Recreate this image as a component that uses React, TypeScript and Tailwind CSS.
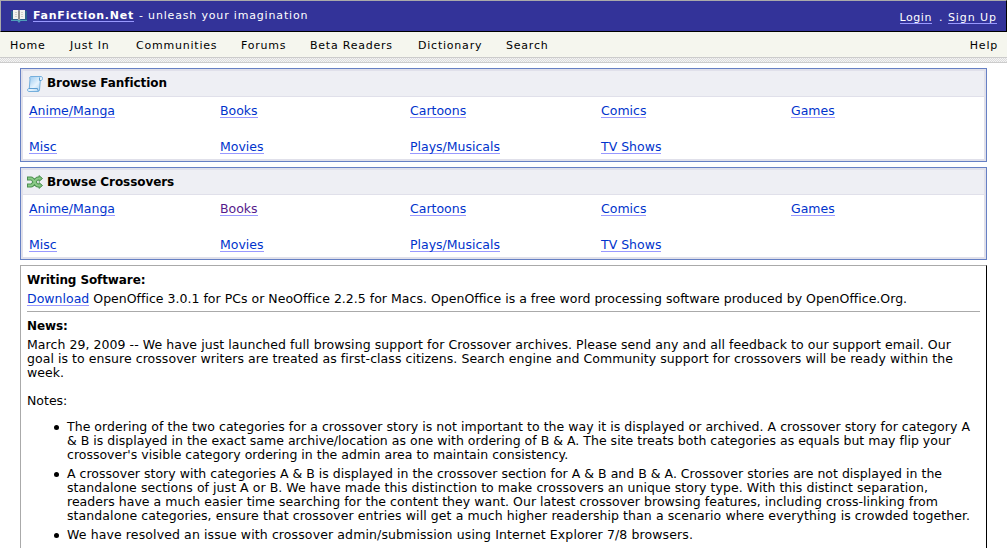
import React from "react";

type LinkItem = {
    label: string;
    visited?: boolean;
};

type Line = {
    text: string;
    tracking: string;
};

const menu = [
    { label: "Home", width: "w-[60px]" },
    { label: "Just In", width: "w-[66px]" },
    { label: "Communities", width: "w-[105px]" },
    { label: "Forums", width: "w-[69px]" },
    { label: "Beta Readers", width: "w-[108px]" },
    { label: "Dictionary", width: "w-[88px]" },
    { label: "Search", width: "w-[60px]" },
];

const categories: LinkItem[] = [
    { label: "Anime/Manga" },
    { label: "Books" },
    { label: "Cartoons" },
    { label: "Comics" },
    { label: "Games" },
    { label: "Misc" },
    { label: "Movies" },
    { label: "Plays/Musicals" },
    { label: "TV Shows" },
];

const crossovers: LinkItem[] = categories.map((c) => (c.label === "Books" ? { ...c, visited: true } : c));

const news: Line[] = [
    {
        text: "March 29, 2009 -- We have just launched full browsing support for Crossover archives. Please send any and all feedback to our support email. Our",
        tracking: "tracking-[0.058px]",
    },
    {
        text: "goal is to ensure crossover writers are treated as first-class citizens. Search engine and Community support for crossovers will be ready within the",
        tracking: "tracking-[0.056px]",
    },
    { text: "week.", tracking: "tracking-[0.05px]" },
];

const notes: Line[][] = [
    [
        {
            text: "The ordering of the two categories for a crossover story is not important to the way it is displayed or archived. A crossover story for category A",
            tracking: "tracking-[0.036px]",
        },
        {
            text: "& B is displayed in the exact same archive/location as one with ordering of B & A. The site treats both categories as equals but may flip your",
            tracking: "tracking-[0.015px]",
        },
        {
            text: "crossover's visible category ordering in the admin area to maintain consistency.",
            tracking: "tracking-[0.01px]",
        },
    ],
    [
        {
            text: "A crossover story with categories A & B is displayed in the crossover section for A & B and B & A. Crossover stories are not displayed in the",
            tracking: "tracking-[0.017px]",
        },
        {
            text: "standalone sections of just A or B. We have made this distinction to make crossovers an unique story type. With this distinct separation,",
            tracking: "tracking-[0.054px]",
        },
        {
            text: "readers have a much easier time searching for the content they want. Our latest crossover browsing features, including cross-linking from",
            tracking: "tracking-[0.033px]",
        },
        {
            text: "standalone categories, ensure that crossover entries will get a much higher readership than a scenario where everything is crowded together.",
            tracking: "tracking-[0.085px]",
        },
    ],
    [
        {
            text: "We have resolved an issue with crossover admin/submission using Internet Explorer 7/8 browsers.",
            tracking: "tracking-[0.117px]",
        },
    ],
];

const BookIcon = () => (
    <svg width="16" height="14" viewBox="0 0 16 14" className="shrink-0">
        <path d="M0 2h16v10H9.500l-1 1.500h-1L6.500 12H0z" fill="#2b5f8a" />
        <path d="M0 11h16v1H9.500l-1 1.500h-1L6.500 12H0z" fill="#4f9dba" />
        <path d="M2 1h5l1 1 1-1h5v9H9.500L8 11l-1.500-1H2z" fill="#f2f2ee" />
        <path d="M7 1.500l1 .5 1-.5V10l-1 1-1-1z" fill="#8e8e8c" />
        <path d="M4 3.500h2M4 5.500h2M4 7.500h2M10 3.500h2M10 5.500h2M10 7.500h2" stroke="#cfcfca" />
    </svg>
);

const ScrollIcon = () => (
    <svg width="16" height="16" viewBox="0 0 16 16" className="shrink-0">
        <defs>
            <linearGradient id="paper" x1="0" y1="0" x2="1" y2="1">
                <stop offset="0" stopColor="#8fc4ef" />
                <stop offset="0.55" stopColor="#e6f3fd" />
                <stop offset="1" stopColor="#9ccbf0" />
            </linearGradient>
        </defs>
        <path
            d="M3.500.5h10.500c1 0 1.500.8 1.500 2s-.5 2-1.500 2h-.7L12.500 14c-.1 1-.7 1.500-1.500 1.500H2C1 15.500.5 14.800.5 14s.5-1.500 1.500-1.500h.3L3 3C2.500 2 2.500 1 3.500.5z"
            fill="url(#paper)"
            stroke="#75afdc"
        />
        <path d="M12.500 1.500v3h1.500M2 12.500h8.500c0 1 .3 2 1 2.500" fill="none" stroke="#5d9ed2" />
    </svg>
);

const ShuffleIcon = () => (
    <svg width="16" height="14" viewBox="0 0 16 14" className="shrink-0">
        <g fill="none" strokeLinejoin="round">
            <path d="M0 3.500h4c3 0 4 7 7 7h1.500M0 10.500h4c3 0 4-7 7-7h1.500" stroke="#4c8f50" strokeWidth="4" />
            <path d="M12 .6l3.500 2.900L12 6.400zM12 7.600l3.500 2.900-3.500 2.900z" fill="#7fc27b" stroke="#4c8f50" />
            <path d="M1 3.500h3c3 0 4 7 7 7h2M1 10.500h3c3 0 4-7 7-7h2" stroke="#8acb86" strokeWidth="2" />
        </g>
    </svg>
);

const TextLink: React.FC<LinkItem> = ({ label, visited }) => (
    <a
        href="#"
        className={`inline-block border-b border-[#9999ff] leading-[13px] ${
            visited ? "text-[#551a8b]" : "text-[#0033cc]"
        }`}
    >
        {label}
    </a>
);

const TextLines: React.FC<{ lines: Line[] }> = ({ lines }) => (
    <>
        {lines.map((line) => (
            <span key={line.text} className={`block whitespace-nowrap ${line.tracking}`}>
                {line.text}
            </span>
        ))}
    </>
);

type PanelProps = {
    title: string;
    icon: React.ReactNode;
    items: LinkItem[];
    headerClass: string;
};

const Panel: React.FC<PanelProps> = ({ title, icon, items, headerClass }) => (
    <section className="border border-[#6680c4]">
        <div className="border-2 border-[#e0e0ea]">
            <h2
                className={`flex items-center gap-1 border-b border-[#e0e0ea] bg-[#eeeff4] pl-1 text-[12px] leading-[14px] font-bold tracking-[-0.07px] ${headerClass}`}
            >
                {icon}
                <span className="pb-px">{title}</span>
            </h2>
            <div className="grid grid-cols-[191px_190px_191px_190px_auto] gap-y-[22px] pt-[7px] pb-[5px] pl-[6px]">
                {items.map((item) => (
                    <div key={item.label} className="flex">
                        <TextLink {...item} />
                    </div>
                ))}
            </div>
        </div>
    </section>
);

const App: React.FC = () => {
    return (
        <div className="h-[548px] overflow-hidden bg-white font-['DejaVu_Sans',Verdana,sans-serif] text-[12.5px] leading-[14px] text-black">
            <header className="flex h-8 items-start justify-between border border-t-[#aaaaaa] border-r-black border-b-black border-l-[#aaaaaa] bg-[#333399] pr-[9px] pl-[10px] text-[11px] leading-[13px] text-white">
                <div className="flex pt-2">
                    <BookIcon />
                    <div className="ml-1.5 flex items-baseline pt-px">
                        <a href="#" className="inline-block border-b border-[#9999ff] leading-[11px] font-bold tracking-[0.75px]">
                            FanFiction.Net
                        </a>
                        <span className="ml-[5px] leading-[11px] tracking-[0.83px]">- unleash your imagination</span>
                    </div>
                </div>
                <div className="flex items-baseline pt-[11px] leading-[11px] tracking-[0.93px]">
                    <a href="#" className="inline-block border-b border-[#9999ff] tracking-[0.55px]">Login</a>
                    <span className="w-4 pl-[7px]">.</span>
                    <a href="#" className="inline-block border-b border-[#9999ff]">Sign Up</a>
                </div>
            </header>

            <nav className="flex h-[25px] bg-[#f5f6ee] pt-[7px] pr-[9px] pl-[10px] text-[11px] leading-[13px] tracking-[0.78px]">
                {menu.map((item) => (
                    <a key={item.label} href="#" className={`whitespace-nowrap ${item.width}`}>
                        {item.label}
                    </a>
                ))}
                <a href="#" className="ml-auto">Help</a>
            </nav>
            <div className="h-1.5 border-y border-[#cccccc] bg-[repeating-conic-gradient(#dcdcdc_0_25%,#f4f4f4_0_50%)] bg-[length:2px_2px]" />

            <main className="mr-5 ml-5 flex flex-col gap-[5px] pt-[5px]">
                <Panel title="Browse Fanfiction" icon={<ScrollIcon />} items={categories} headerClass="h-[26px]" />
                <Panel title="Browse Crossovers" icon={<ShuffleIcon />} items={crossovers} headerClass="h-[25px]" />

                <section className="h-[300px] border-t border-r border-l border-t-[#aaaaaa] border-r-black border-l-[#aaaaaa] px-1.5 pt-[7px]">
                    <h3 className="text-[12px] font-bold tracking-[-0.1px]">Writing Software:</h3>
                    <p className="mt-[5px] flex h-[14px] items-baseline whitespace-pre tracking-[0.02px]">
                        <TextLink label="Download" />
                        <span>
                            {" OpenOffice 3.0.1 for PCs or NeoOffice 2.2.5 for Macs. OpenOffice is a free word processing software produced by OpenOffice.Org."}
                        </span>
                    </p>
                    <hr className="mt-[5px] mb-[7px] border-[#aaaaaa]" />
                    <h3 className="text-[12px] font-bold tracking-[-0.1px]">News:</h3>
                    <p className="mt-[5px]">
                        <TextLines lines={news} />
                    </p>
                    <p className="mt-[14px]">Notes:</p>
                    <ul className="mt-3 flex flex-col gap-[5px]">
                        {notes.map((lines, idx) => (
                            <li key={idx} className="flex">
                                <span className="mt-[5px] mr-2 ml-[27px] size-[5px] shrink-0 rounded-full bg-black" />
                                <div>
                                    <TextLines lines={lines} />
                                </div>
                            </li>
                        ))}
                    </ul>
                </section>
            </main>
        </div>
    );
};

export default App;
